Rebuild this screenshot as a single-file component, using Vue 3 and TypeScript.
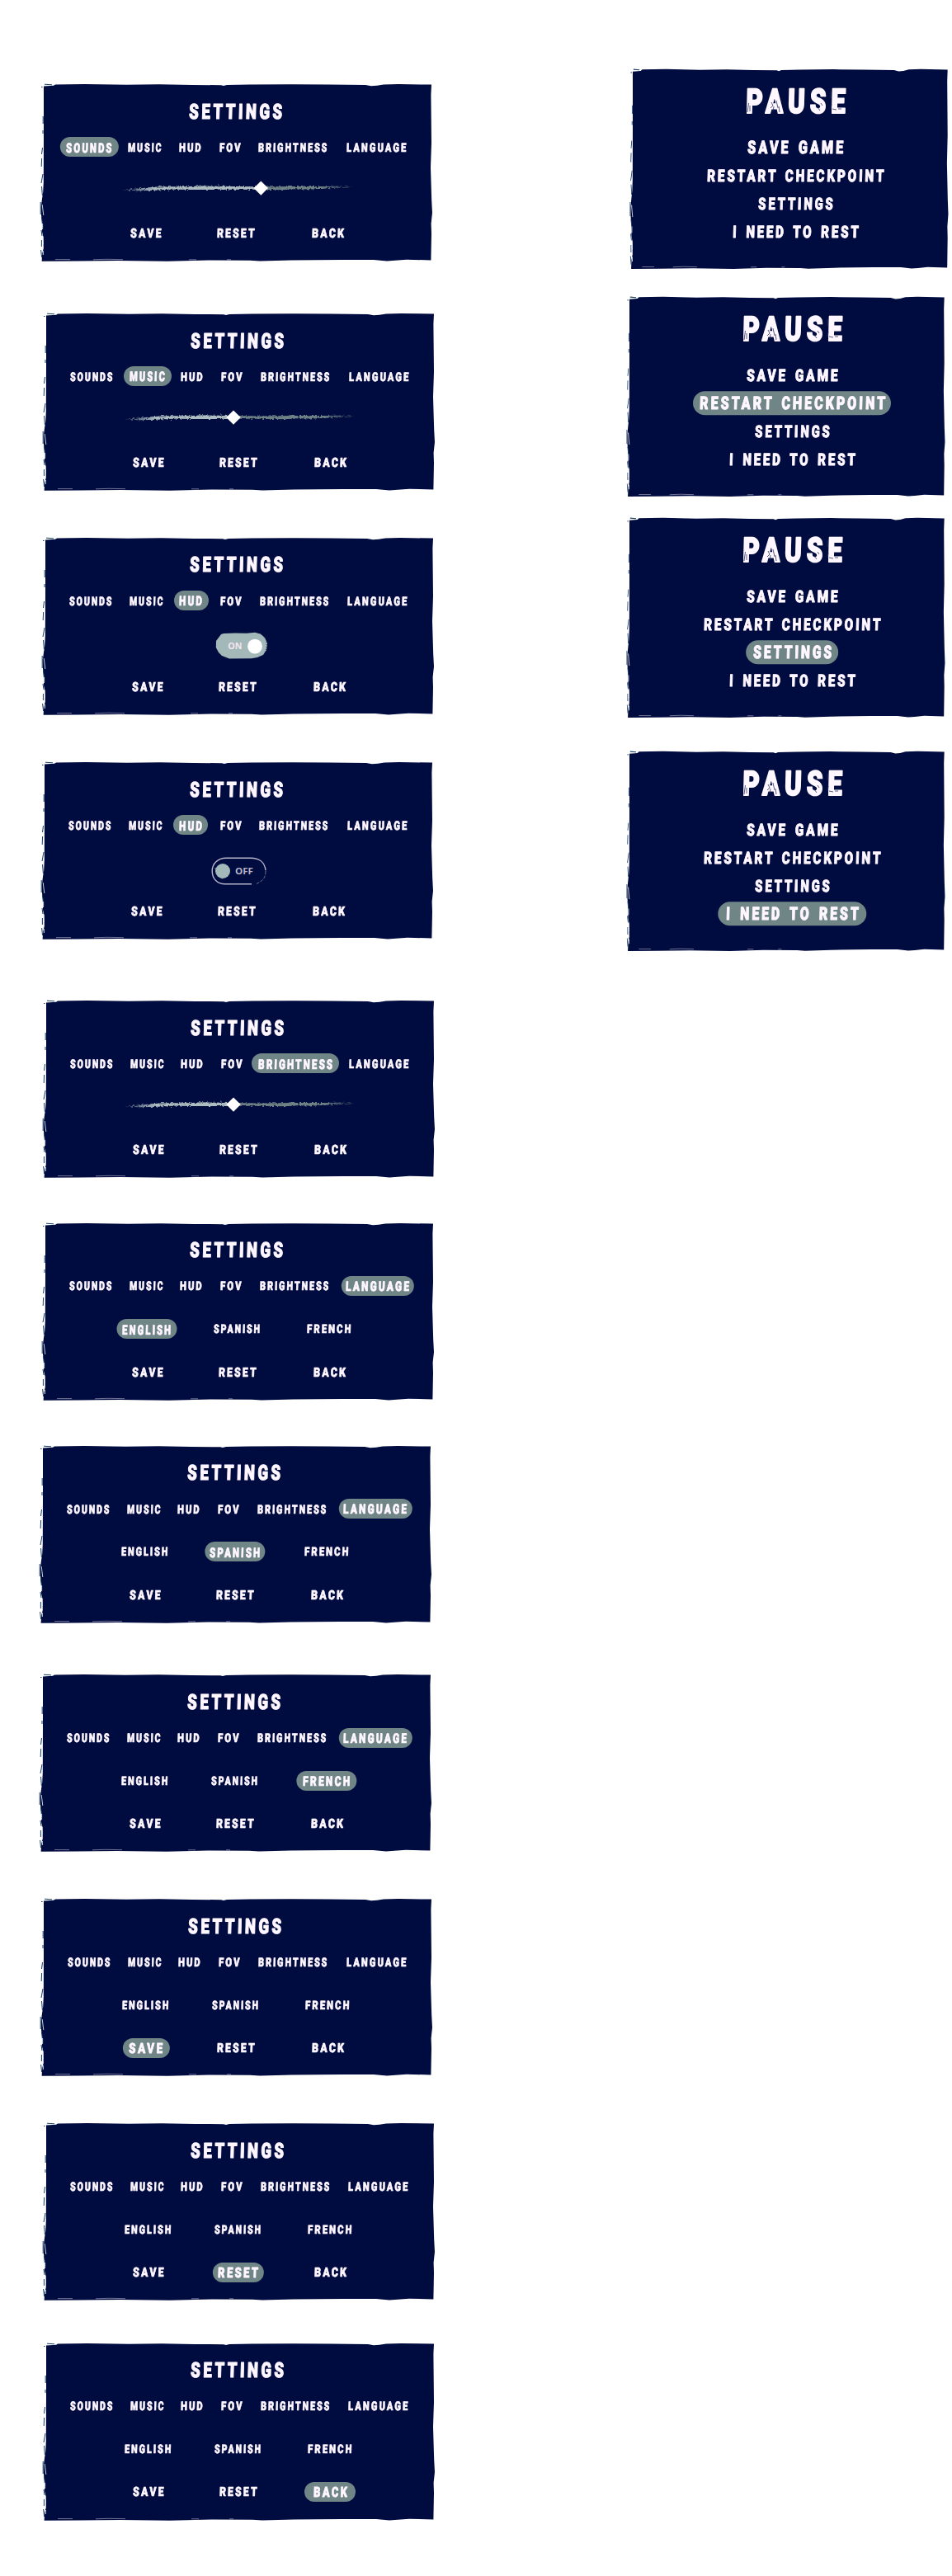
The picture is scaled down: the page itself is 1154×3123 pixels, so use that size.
<script setup lang="ts">
import { defineComponent, h } from 'vue'

interface Item { label: string; x: number; w: number; pill: number; big: number }
interface SettingsPanel {
  x: number; y: number; tab?: string; body: 'slider' | 'on' | 'off' | 'languages'
  value?: number; language?: string; action?: string
}
interface PausePanel { x: number; y: number; active: string; bare?: boolean }

const SETTINGS_H = 212
const PAUSE_H = 239

/* A word set in the condensed brush lettering, sized by cap height and width. */
const Word = defineComponent({
  props: {
    text: { type: String, required: true },
    w: { type: Number, required: true },
    cap: { type: Number, required: true },
  },
  setup(p) {
    return () => h('svg', { class: 'word', width: p.w, height: p.cap, overflow: 'visible' }, [
      h('text', {
        x: 0,
        y: p.cap,
        'font-size': p.cap / 0.711,
        'stroke-width': p.cap * 0.065,
        textLength: p.w / (1 - 0.23 / p.text.length),
        lengthAdjust: 'spacingAndGlyphs',
        transform: `translate(${p.cap * 0.03} 0) skewX(-1.5)`,
      }, p.text),
    ])
  },
})

const tabs: Item[] = [
  { label: 'SOUNDS', x: 29, w: 51.3, pill: 70.3, big: 55.3 },
  { label: 'MUSIC', x: 102, w: 40.3, pill: 58, big: 42.7 },
  { label: 'HUD', x: 163.3, w: 26.4, pill: 42, big: 27.7 },
  { label: 'FOV', x: 212.3, w: 25.4, pill: 42, big: 27 },
  { label: 'BRIGHTNESS', x: 260, w: 83.3, pill: 106, big: 90 },
  { label: 'LANGUAGE', x: 366.7, w: 72, pill: 88.4, big: 76.7 },
]
const languages: Item[] = [
  { label: 'ENGLISH', x: 95, w: 56.3, pill: 73, big: 59 },
  { label: 'SPANISH', x: 204.3, w: 56, pill: 73.3, big: 61 },
  { label: 'FRENCH', x: 317, w: 53.3, pill: 73.3, big: 57 },
]
const actions: Item[] = [
  { label: 'SAVE', x: 105, w: 37.3, pill: 56.3, big: 41 },
  { label: 'RESET', x: 210, w: 45.5, pill: 62.3, big: 49 },
  { label: 'BACK', x: 325, w: 38.7, pill: 62, big: 40.7 },
]
const menu: Item[] = [
  { label: 'SAVE GAME', x: 0, w: 110.3, pill: 140, big: 116 },
  { label: 'RESTART CHECKPOINT', x: 0, w: 214.3, pill: 240, big: 225 },
  { label: 'SETTINGS', x: 0, w: 90.7, pill: 111.7, big: 95 },
  { label: 'I NEED TO REST', x: 0, w: 153, pill: 179.4, big: 161 },
]

const settings: SettingsPanel[] = [
  { x: 53.3, y: 103.3, tab: 'SOUNDS', body: 'slider', value: 263.3 },
  { x: 56, y: 381, tab: 'MUSIC', body: 'slider', value: 227 },
  { x: 54.7, y: 652.8, tab: 'HUD', body: 'on' },
  { x: 54.3, y: 925.4, tab: 'HUD', body: 'off' },
  { x: 56, y: 1214.3, tab: 'BRIGHTNESS', body: 'slider', value: 227 },
  { x: 54.7, y: 1483.7, tab: 'LANGUAGE', body: 'languages', language: 'ENGLISH' },
  { x: 52, y: 1753.8, tab: 'LANGUAGE', body: 'languages', language: 'SPANISH' },
  { x: 52, y: 2031.5, tab: 'LANGUAGE', body: 'languages', language: 'FRENCH' },
  { x: 53.2, y: 2303.5, body: 'languages', action: 'SAVE' },
  { x: 55.6, y: 2575.4, body: 'languages', action: 'RESET' },
  { x: 55.6, y: 2841.6, body: 'languages', action: 'BACK' },
]
const pauses: PausePanel[] = [
  { x: 767.3, y: 85, active: 'SAVE GAME', bare: true },
  { x: 763.3, y: 361, active: 'RESTART CHECKPOINT' },
  { x: 763.3, y: 629, active: 'SETTINGS' },
  { x: 763.3, y: 912, active: 'I NEED TO REST' },
]

function placement(list: { x: number; y: number }[], i: number, height: number, origin: number) {
  const above = i ? list[i - 1].y + height : 0
  return { marginTop: `${list[i].y - above}px`, marginLeft: `${list[i].x - origin}px` }
}

/* Column tracks alternate gap / word so that every word keeps its own width. */
function tracks(items: Item[]) {
  let edge = 0
  const cols = items.map((it) => {
    const gap = it.x - edge
    edge = it.x + it.w
    return `${gap.toFixed(1)}px ${it.w}px`
  })
  return { gridTemplateColumns: cols.join(' ') }
}
</script>

<template>
  <main class="board">
    <svg class="defs" width="0" height="0" aria-hidden="true">
      <defs>
        <filter id="rough" x="-5%" y="-20%" width="110%" height="140%">
          <feTurbulence type="fractalNoise" base-frequency="0.25" numOctaves="2" seed="4" />
          <feDisplacementMap in="SourceGraphic" scale="1.3" xChannelSelector="R" yChannelSelector="G" />
        </filter>
        <filter id="bristle" filterUnits="userSpaceOnUse" x="0" y="-6" width="290" height="30">
          <feTurbulence type="fractalNoise" baseFrequency="0.35 0.5" numOctaves="2" seed="9" />
          <feDisplacementMap in="SourceGraphic" scale="5" xChannelSelector="R" yChannelSelector="G" />
        </filter>
        <linearGradient id="fade" gradientUnits="userSpaceOnUse" x1="0" x2="283" y1="0" y2="0">
          <stop offset="0" stop-color="#fff" stop-opacity=".25" />
          <stop offset=".14" stop-color="#fff" />
          <stop offset=".86" stop-color="#fff" />
          <stop offset="1" stop-color="#fff" stop-opacity=".15" />
        </linearGradient>
        <mask id="taper" maskUnits="userSpaceOnUse" x="-5" y="-5" width="295" height="30">
          <rect x="-5" y="-5" width="295" height="30" fill="url(#fade)" />
        </mask>
        <g id="sheet">
          <path
            d="M0 1.5 12 .8 14 -.6 50 -1 100 -.2 140 -.7 180 0 215 .2 218 1 222 0 250 -.5 300 -.8 345 -.5 390 0 397 1.3 404 .8 412 -.6 430 -1 470 -.4 469.4 12 470 70 469 100 470.2 140 471 155 469.6 168 470 180 469.4 212.4 440 211.8 426 212.8 416 213.4 400 212 360 212 300 212.6 262 213.6 250 212.8 200 212.6 150 213.8 90 213 40 213.6 -2.4 213.8 -1.8 204 -.2 198 -.5 184 -2 178 -1.8 166 -3 158 -3.3 148 -2 138 -.8 130 -.2 118 0 60Z"
            fill="#000b3f"
          />
          <g fill="none" stroke="#174063" stroke-width="1">
            <path d="M-3 2.5h1.5M1 -.8 10 -.2M-.8 38v9M-1 55v4M-1.5 76-2.5 84M-2.4 89-2.8 99M-1 108-3 119M-2.5 123-1.6 134M-3.8 142v15M-2.6 160-1.2 172M-3 176l1 7M-2.6 188v8M-3.4 200l1 9" />
          </g>
          <g fill="none" stroke="#e9dcee" stroke-width=".5">
            <path d="M14 211.6H32M60 211.8 76 211.3 96 211.7M176 211.8h9M222 211.8h5" />
          </g>
          <g fill="none" stroke="#fff" stroke-width=".8">
            <path d="M-1.8 145-.2 158M-1.4 168v7M-1 184v9M-.6 201v5" />
          </g>
        </g>
      </defs>
    </svg>

    <div class="column settings-column">
      <section v-for="(p, i) in settings" :key="i" class="panel settings" :style="placement(settings, i, SETTINGS_H, 0)">
        <svg class="sheet" viewBox="0 0 470 212" preserveAspectRatio="none"><use href="#sheet" /></svg>
        <h2 class="title"><Word text="SETTINGS" :w="113" :cap="18" /></h2>

        <nav class="row tabs" :style="tracks(tabs)">
          <span v-for="t in tabs" :key="t.label" class="item">
            <i v-if="p.tab === t.label" class="pill" :style="{ width: t.pill + 'px' }" />
            <Word :text="t.label" :w="p.tab === t.label ? t.big : t.w" :cap="p.tab === t.label ? 11.5 : 10.5" />
          </span>
        </nav>

        <div class="body">
          <div v-if="p.body === 'languages'" class="row" :style="tracks(languages)">
            <span v-for="l in languages" :key="l.label" class="item">
              <i v-if="p.language === l.label" class="pill" :style="{ width: l.pill + 'px' }" />
              <Word :text="l.label" :w="p.language === l.label ? l.big : l.w" :cap="p.language === l.label ? 11.5 : 10.3" />
            </span>
          </div>

          <svg v-else-if="p.body === 'slider'" class="slider" width="283" height="18" overflow="visible">
            <g mask="url(#taper)">
              <g filter="url(#bristle)">
                <path d="M0 11 20 9.500 45 7.500 80 7.300 93 6.600 120 6.800 165 7.400 205 7 245 7 262 6.400 283 7.600 262 8.500 235 10.500 210 10.300 195 11.300 165 10.800 120 10.800 93 11 60 10.500 35 12 18 12.200Z" fill="#6d8083" />
                <path
                  :d="`M0 11 20 9.500 45 7.500 80 7.300 93 6.600 120 6.800 ${p.value! - 94} 7.400V10.800L120 10.800 93 11 60 10.500 35 12 18 12.200Z`"
                  fill="#acbcc0"
                />
              </g>
            </g>
            <path :d="`M${p.value! - 94} .4l8.700 8.700-8.700 8.700-8.700-8.700Z`" fill="#fff" />
          </svg>

          <svg v-else-if="p.body === 'on'" class="toggle on" width="64" height="34" overflow="visible">
            <path d="M7 3 10 2 24 1.400 38 1.800 48 .8 55 2.600 60 7 63 14 62 22 58 28 51 31 44 32.200 17 32.600 8 29 4 25 .8 19 1 11Z" fill="#a3b8b9" filter="url(#rough)" />
            <path d="M52 1.500q6 2 9 8M62 12q1 7-2 13M55 30l3-2" fill="none" stroke="#000b3f" stroke-width=".8" stroke-dasharray="1 2" />
            <circle cx="48" cy="17.600" r="8.900" fill="#fff" filter="url(#rough)" />
            <text x="15.200" y="21" textLength="17.200" lengthAdjust="spacingAndGlyphs" class="state">ON</text>
          </svg>

          <svg v-else class="toggle off" width="67" height="34" overflow="visible">
            <path d="M49 32.800H17C7 32.800 1.200 26 1.200 17S8 1.300 18 1.300h30c10 0 17 5 18 15" fill="none" stroke="#b8b4c9" stroke-width="1.400" filter="url(#rough)" />
            <path d="M66 17q0 9-6 12.500l-5 3" fill="none" stroke="#8c8ca8" stroke-width=".8" stroke-dasharray="4 1.500" />
            <path d="M5 13Q6 24 15 26.500" fill="none" stroke="#a3b8b9" stroke-width=".8" stroke-dasharray="2 1" />
            <circle cx="14" cy="17" r="9" fill="#a3b8b9" filter="url(#rough)" />
            <text x="29" y="21.200" textLength="22" lengthAdjust="spacingAndGlyphs" class="state dim">OFF</text>
          </svg>
        </div>

        <div class="row actions" :style="tracks(actions)">
          <span v-for="a in actions" :key="a.label" class="item">
            <i v-if="p.action === a.label" class="pill" :style="{ width: a.pill + 'px' }" />
            <Word :text="a.label" :w="p.action === a.label ? a.big : a.w" :cap="p.action === a.label ? 12 : 11" />
          </span>
        </div>
      </section>
    </div>

    <div class="column">
      <section v-for="(p, i) in pauses" :key="i" class="panel pause" :style="placement(pauses, i, PAUSE_H, 527)">
        <svg class="sheet" viewBox="0 0 470 212" preserveAspectRatio="none"><use href="#sheet" /></svg>
        <h1 class="title">
          <Word text="PAUSE" :w="120.6" :cap="29.3" />
          <svg class="scratches" width="121" height="30">
            <path d="M3.500 17 2 28M5 20v7M31 16l2 4M34 21l-1 6M37 14l2 9M40 21l1 7M30 23l3-3M87 22l3 4M91 17l2 3M103 3v8M105 24l5 1M112 24h4M104 18l-1 6" />
          </svg>
        </h1>
        <ul class="menu">
          <li v-for="m in menu" :key="m.label" class="item">
            <i v-if="p.active === m.label && !p.bare" class="pill" :style="{ width: m.pill + 'px' }" />
            <Word :text="m.label" :w="p.active === m.label ? m.big : m.w" :cap="p.active === m.label ? 15.3 : 14.2" />
          </li>
        </ul>
      </section>
    </div>
  </main>
</template>

<style>
body {
  margin: 0;
  background: #fff;
}
.word {
  position: relative;
  display: block;
  flex: none;
  overflow: visible;
  filter: url(#rough);
}
.word text {
  font-family: Roboto, "Liberation Sans", sans-serif;
  font-weight: 900;
  letter-spacing: 0.19em;
  word-spacing: 0.14em;
  fill: #fff7ff;
  stroke: #fff7ff;
  stroke-linejoin: round;
}
</style>

<style scoped>
.board {
  display: flex;
  width: 1154px;
  height: 3123px;
  overflow: hidden;
  background: #fff;
}
.defs {
  position: absolute;
}
.column {
  display: flex;
  flex-direction: column;
}
.settings-column {
  width: 527px;
}
.panel {
  position: relative;
  flex: none;
  display: flex;
  flex-direction: column;
}
.settings {
  width: 470px;
  height: 212px;
}
.pause {
  width: 381.7px;
  height: 239px;
  align-items: center;
}
.sheet {
  position: absolute;
  inset: 0;
  width: 100%;
  height: 100%;
  overflow: visible;
}
.title {
  position: relative;
  margin: 0;
}
.settings .title {
  height: 18px;
  padding: 22.7px 0 0 175.3px;
}
.pause .title {
  height: 29.7px;
  margin: 23px 0 0 12.6px;
}
.scratches {
  position: absolute;
  inset: 0;
}
.scratches path {
  fill: none;
  stroke: #26345f;
  stroke-width: 0.8;
}
.row {
  display: grid;
  align-items: center;
  height: 24px;
}
.row .item {
  grid-row: 1;
}
.row .item:nth-child(1) { grid-column: 2; }
.row .item:nth-child(2) { grid-column: 4; }
.row .item:nth-child(3) { grid-column: 6; }
.row .item:nth-child(4) { grid-column: 8; }
.row .item:nth-child(5) { grid-column: 10; }
.row .item:nth-child(6) { grid-column: 12; }
.tabs {
  margin-top: 22.4px;
}
.body {
  height: 50px;
  margin-top: 18.6px;
  display: flex;
  flex-direction: column;
  justify-content: center;
}
.body .row {
  margin-top: -6px;
}
.slider {
  position: relative;
  margin: -12px 0 0 94px;
}
.toggle {
  position: relative;
  display: block;
}
.on {
  margin-left: 206.7px;
}
.off {
  margin-left: 201.3px;
}
.state {
  font: 700 9.8px "Open Sans", "Noto Sans", sans-serif;
  fill: #f4e6ee;
}
.dim {
  font-weight: 700;
  font-size: 10.4px;
  fill: #b8b4c9;
}
.actions {
  margin-top: 11.7px;
}
.item {
  position: relative;
  display: flex;
  align-items: center;
  justify-content: center;
  height: 24px;
}
.pill {
  position: absolute;
  left: calc(50% + 0.5px);
  top: 50%;
  height: 24px;
  border-radius: 13px;
  background: #6f8586;
  transform: translate(-50%, -50%);
}
.menu {
  list-style: none;
  margin: 24px 0 0 12.6px;
  padding: 0;
  display: flex;
  flex-direction: column;
  align-items: center;
}
.menu .item {
  height: 34px;
}
.menu .pill {
  left: 50%;
  height: 29.7px;
  border-radius: 15px;
}
</style>
